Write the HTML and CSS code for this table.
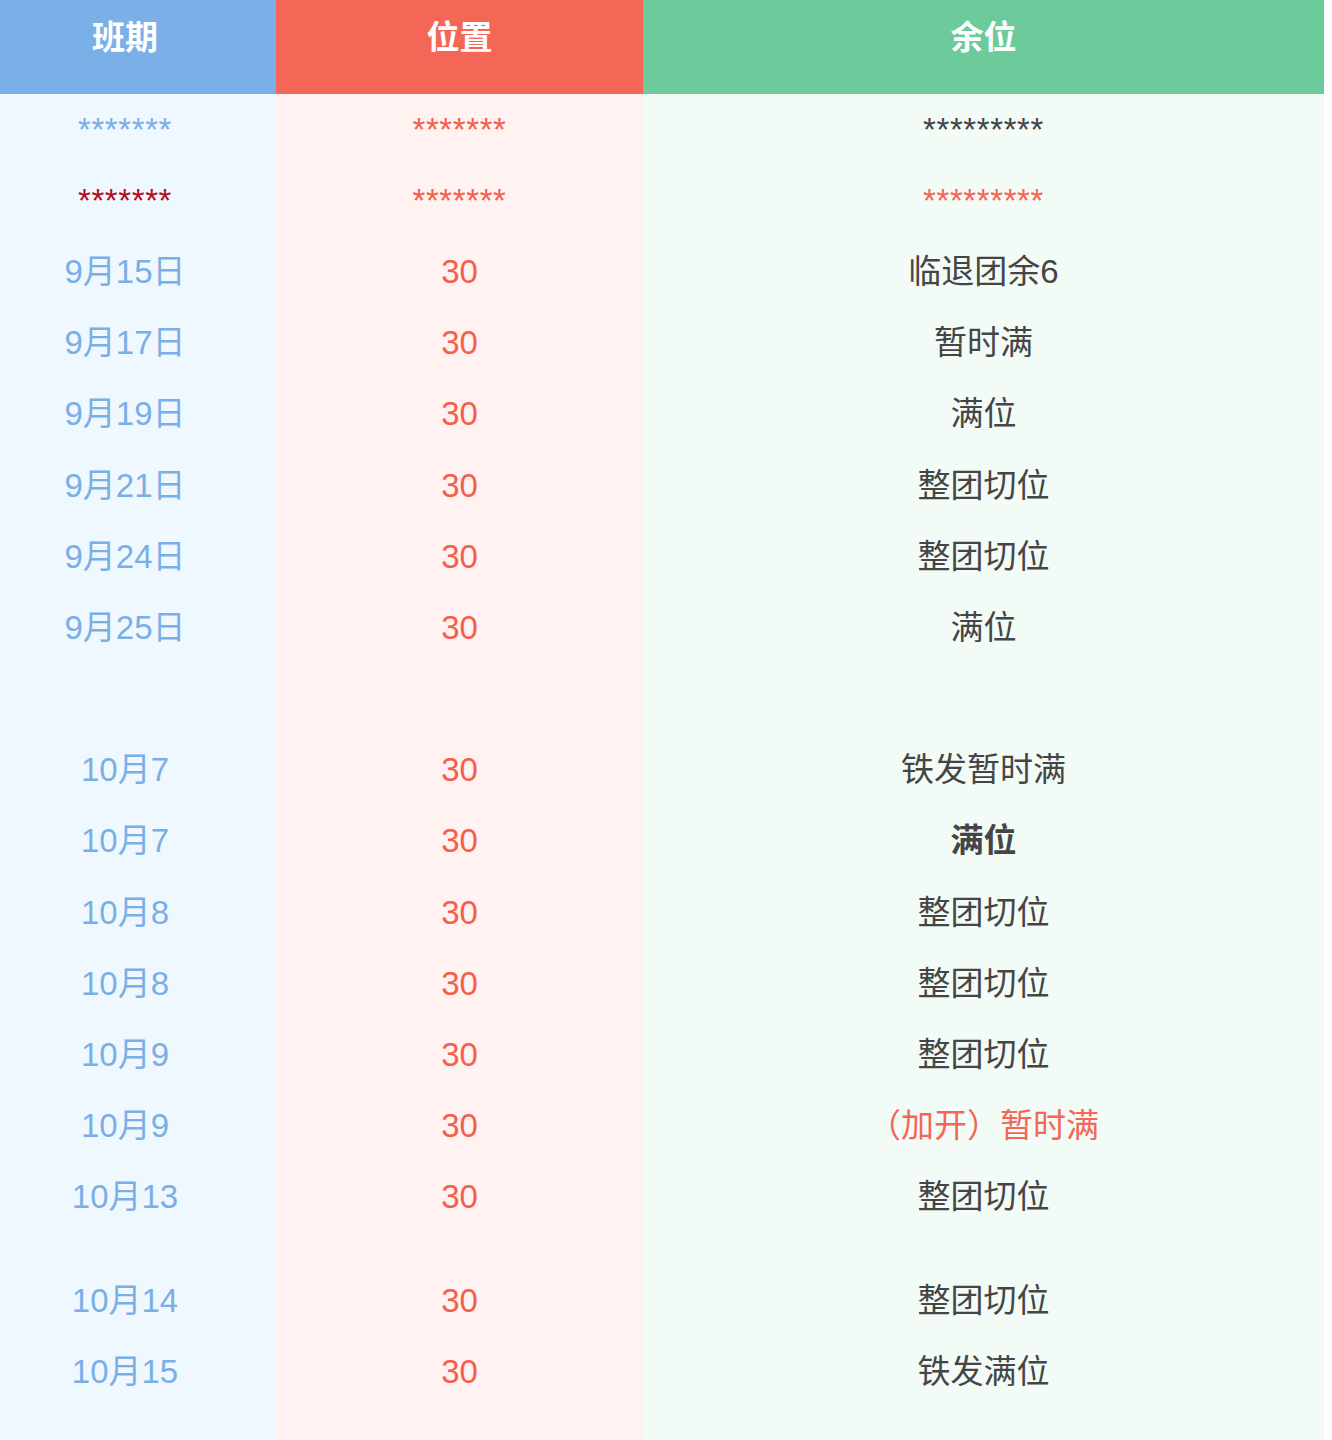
FILE: index.html
```html
<!DOCTYPE html>
<html lang="zh-CN">
<head>
<meta charset="utf-8">
<title>班期余位</title>
<link rel="stylesheet" href="styles.css">
</head>
<body>
<table class="sched">
  <colgroup>
    <col class="c1"><col class="c2"><col class="c3">
  </colgroup>
  <thead>
    <tr class="head">
      <th class="h1">班期</th>
      <th class="h2">位置</th>
      <th class="h3">余位</th>
    </tr>
  </thead>
  <tbody>
    <tr class="row"><td class="d1 star blue">*******</td><td class="d2 star">*******</td><td class="d3 star">*********</td></tr>
    <tr class="row"><td class="d1 star darkred">*******</td><td class="d2 star">*******</td><td class="d3 star red">*********</td></tr>
    <tr class="row"><td class="d1">9月15日</td><td class="d2">30</td><td class="d3">临退团余6</td></tr>
    <tr class="row"><td class="d1">9月17日</td><td class="d2">30</td><td class="d3">暂时满</td></tr>
    <tr class="row"><td class="d1">9月19日</td><td class="d2">30</td><td class="d3">满位</td></tr>
    <tr class="row"><td class="d1">9月21日</td><td class="d2">30</td><td class="d3">整团切位</td></tr>
    <tr class="row"><td class="d1">9月24日</td><td class="d2">30</td><td class="d3">整团切位</td></tr>
    <tr class="row"><td class="d1">9月25日</td><td class="d2">30</td><td class="d3">满位</td></tr>
    <tr class="row"><td class="d1">&nbsp;</td><td class="d2">&nbsp;</td><td class="d3">&nbsp;</td></tr>
    <tr class="row"><td class="d1">10月7</td><td class="d2">30</td><td class="d3">铁发暂时满</td></tr>
    <tr class="row"><td class="d1">10月7</td><td class="d2">30</td><td class="d3 bold">满位</td></tr>
    <tr class="row"><td class="d1">10月8</td><td class="d2">30</td><td class="d3">整团切位</td></tr>
    <tr class="row"><td class="d1">10月8</td><td class="d2">30</td><td class="d3">整团切位</td></tr>
    <tr class="row"><td class="d1">10月9</td><td class="d2">30</td><td class="d3">整团切位</td></tr>
    <tr class="row"><td class="d1">10月9</td><td class="d2">30</td><td class="d3 red">（加开）暂时满</td></tr>
    <tr class="row"><td class="d1">10月13</td><td class="d2">30</td><td class="d3">整团切位</td></tr>
    <tr class="gap"><td class="d1"></td><td class="d2"></td><td class="d3"></td></tr>
    <tr class="row"><td class="d1">10月14</td><td class="d2">30</td><td class="d3">整团切位</td></tr>
    <tr class="row"><td class="d1">10月15</td><td class="d2">30</td><td class="d3">铁发满位</td></tr>
    <tr class="gap end"><td class="d1"></td><td class="d2"></td><td class="d3"></td></tr>
  </tbody>
</table>
</body>
</html>
```
FILE: styles.css
```css
html, body {
  margin: 0;
  padding: 0;
  background: #ffffff;
}

.sched {
  width: 1324px;
  border-collapse: collapse;
  border-spacing: 0;
  table-layout: fixed;
  font-family: "Liberation Sans", Arial, "Noto Sans CJK SC", sans-serif;
  font-size: 33px;
  text-align: center;
}

.c1 { width: 276px; }
.c2 { width: 367px; }
.c3 { width: 681px; }

.sched th,
.sched td {
  padding: 0;
  text-align: center;
  vertical-align: middle;
}

.sched .h1,
.sched .d1 {
  padding-right: 26px;
}

.head th {
  height: 94px;
  box-sizing: border-box;
  padding-top: 18px;
  padding-bottom: 36px;
  line-height: 40px;
  color: #ffffff;
  font-weight: bold;
  font-size: 33px;
  vertical-align: top;
}

.h1 { background: #7bafe8; }
.h2 { background: #f46655; }
.h3 { background: #6dca9a; }

.row td {
  height: 71.2px;
  line-height: 36px;
}

.gap td {
  height: 32px;
}

.gap.end td {
  height: 40px;
}

.d1 { background: #f0f8ff; color: #7aafe6; }
.d2 { background: #fff2f1; color: #f45f4c; }
.d3 { background: #f2fbf6; color: #454545; }

.star { letter-spacing: 0.6px; }
.d1.star.blue { color: #7aafe6; }
.d1.star.darkred { color: #b0101e; }
.d3.red { color: #f46655; }
.bold { font-weight: bold; }
```
